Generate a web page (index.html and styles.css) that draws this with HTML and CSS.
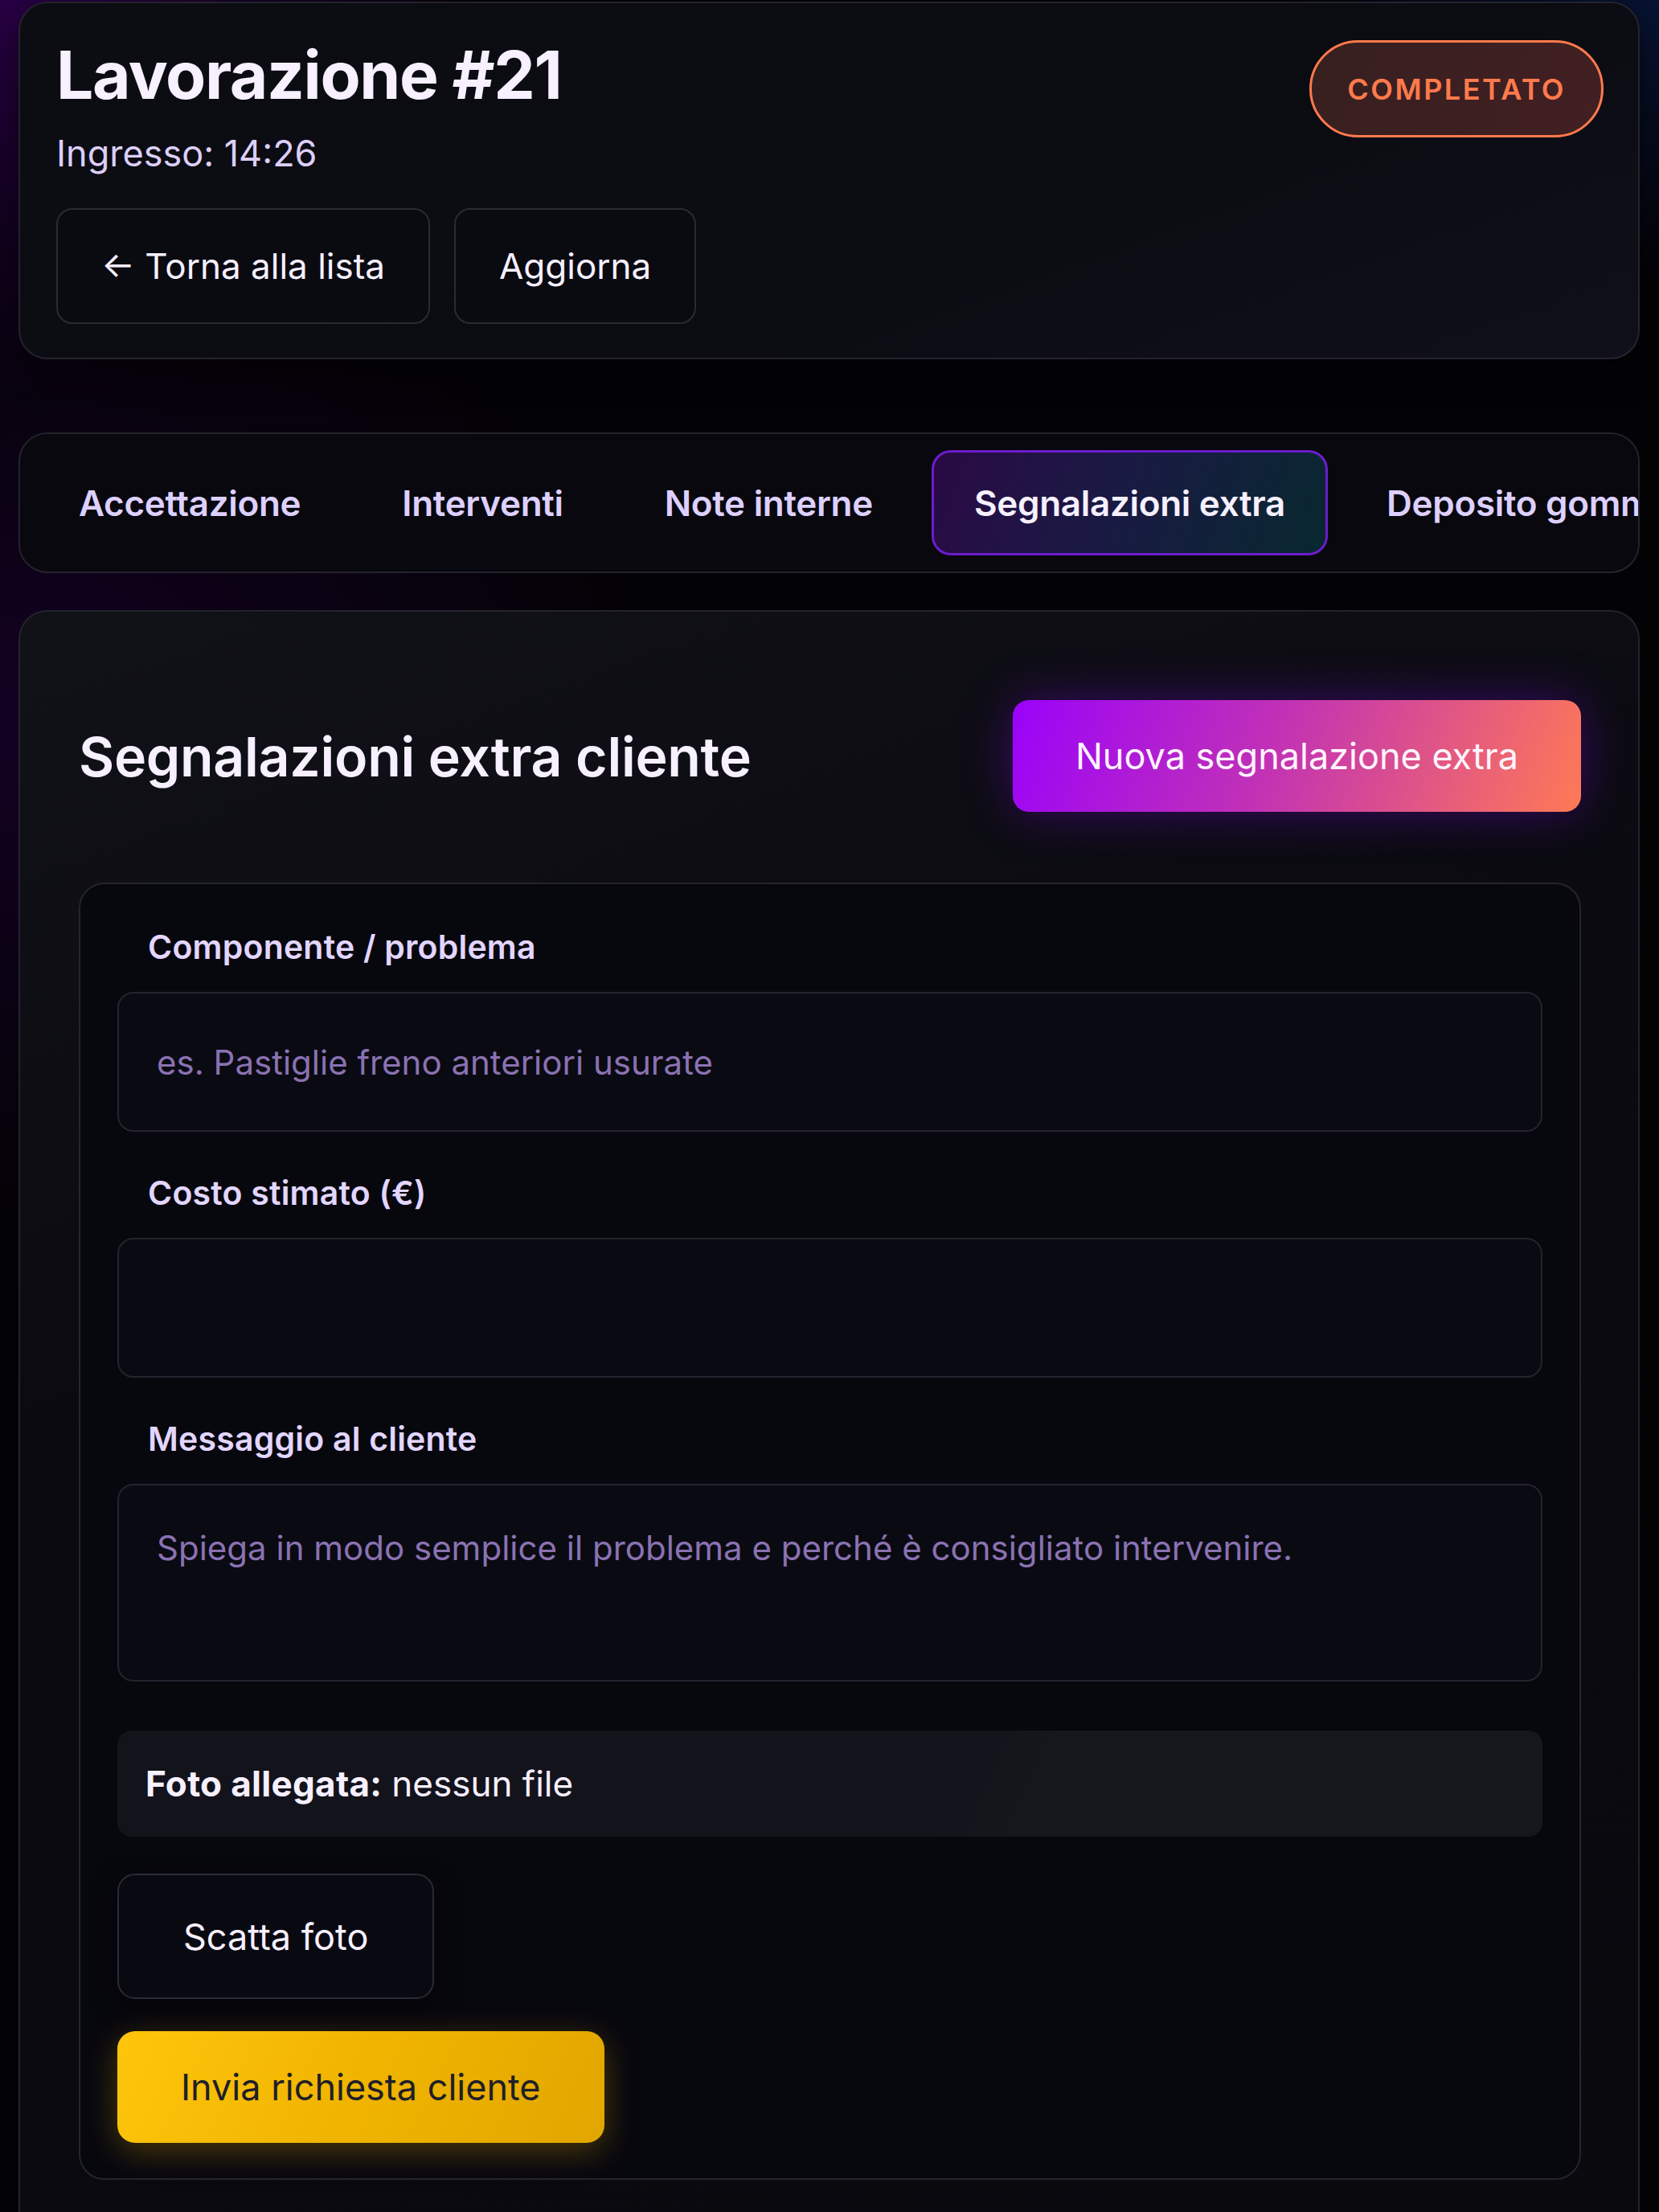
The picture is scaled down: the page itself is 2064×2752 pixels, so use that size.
FILE: index.html
```html
<!DOCTYPE html>
<html lang="it">
	<head>
		<meta charset="UTF-8">
		<title>Lavorazione #21</title>
		<link rel="stylesheet" href="styles.css">
	</head>
	<body>
		<div class="page">
			<!-- testata lavorazione -->
			<header class="job">
				<div class="job-info">
					<h1 class="job-title">Lavorazione #21</h1>
					<p class="job-time">Ingresso: 14:26</p>
					<div class="job-actions">
						<button class="btn btn-line">← Torna alla lista</button>
						<button class="btn btn-line">Aggiorna</button>
					</div>
				</div>
				<span class="status">COMPLETATO</span>
			</header>

			<!-- schede -->
			<nav class="tabs">
				<button class="tab">Accettazione</button>
				<button class="tab">Interventi</button>
				<button class="tab">Note interne</button>
				<button class="tab tab-on">Segnalazioni extra</button>
				<button class="tab">Deposito gomme</button>
			</nav>

			<!-- segnalazioni extra -->
			<section class="panel">
				<div class="panel-head">
					<h2 class="panel-title">Segnalazioni extra cliente</h2>
					<button class="btn btn-grad">Nuova segnalazione extra</button>
				</div>

				<form class="extra">
					<label class="lbl" for="comp">Componente / problema</label>
					<input class="fld" id="comp" type="text" placeholder="es. Pastiglie freno anteriori usurate">

					<label class="lbl" for="costo">Costo stimato (€)</label>
					<input class="fld" id="costo" type="text">

					<label class="lbl" for="msg">Messaggio al cliente</label>
					<textarea class="fld fld-area" id="msg" placeholder="Spiega in modo semplice il problema e perché è consigliato intervenire."></textarea>

					<div class="attach"><b>Foto allegata:</b> nessun file</div>

					<button class="btn btn-photo" type="button">Scatta foto</button>
					<button class="btn btn-yellow" type="button">Invia richiesta cliente</button>
				</form>
			</section>
		</div>
	</body>
</html>
```

FILE: styles.css
```css
*{
	margin: 0;
	padding: 0;
	box-sizing: border-box;
}
html,body{
	background: #050308;
}
body{
	font-family: Inter, "Noto Sans", sans-serif;
	color: #f3ecff;
	min-height: 2752px;
	background:
		radial-gradient(900px 700px at 0 0, rgba(70,0,120,0.55), transparent 70%),
		radial-gradient(700px 500px at 100% 0, rgba(10,30,80,0.6), transparent 70%),
		radial-gradient(1200px 900px at 0 900px, rgba(40,0,70,0.45), transparent 70%),
		#030205;
}
.page{
	padding: 2px 24px 0 23px;
	display: flex;
	flex-direction: column;
}
button{
	font-family: inherit;
	cursor: pointer;
}

/* testata */
.job{
	display: flex;
	justify-content: space-between;
	align-items: flex-start;
	padding: 45px 43px 42px 45px;
	border: 2px solid #24232d;
	border-radius: 36px;
	background: linear-gradient(160deg, #0c0c13, #0b0b12 60%, #10101a);
	box-shadow: 0 20px 40px rgba(0,0,0,0.5);
}
.job-title{
	font-size: 82px;
	line-height: 90px;
	font-weight: 700;
	letter-spacing: -1.4px;
	color: #f6f0ff;
}
.job-time{
	margin-top: 24px;
	font-size: 45px;
	line-height: 56px;
	color: #dccff7;
}
.job-actions{
	display: flex;
	gap: 30px;
	margin-top: 40px;
}
.btn{
	border: 0;
	font-size: 44px;
	display: flex;
	align-items: center;
	justify-content: center;
	white-space: nowrap;
}
.btn-line{
	height: 144px;
	padding: 0 54px;
	border: 2px solid #2a2a34;
	border-radius: 20px;
	background: #0a0a11;
	color: #f6f0ff;
}
.status{
	margin-top: 1px;
	height: 121px;
	padding: 0 44px;
	display: flex;
	align-items: center;
	border: 3px solid #ff7a4c;
	border-radius: 61px;
	background: linear-gradient(120deg, #37201f, #421f23);
	color: #ff7a4c;
	font-size: 36px;
	font-weight: 600;
	letter-spacing: 2.5px;
}

/* schede */
.tabs{
	margin-top: 91px;
	display: flex;
	gap: 20px;
	padding: 20px 0 20px 20px;
	border: 2px solid #24232d;
	border-radius: 36px;
	background: #08080e;
	overflow: hidden;
}
.tab{
	flex: none;
	height: 131px;
	padding: 0 50px;
	border: 3px solid transparent;
	border-radius: 24px;
	background: none;
	color: #ddd0ff;
	font-size: 44px;
	font-weight: 600;
	letter-spacing: -0.3px;
}
.tab-on{
	border-color: #6c1ccc;
	background: linear-gradient(110deg, #2a0a44, #1a1a44 45%, #08282f);
	color: #f6f0ff;
}

/* pannello */
.panel{
	margin-top: 46px;
	padding: 110px 71px 80px 73px;
	border: 2px solid #24232d;
	border-bottom: 0;
	border-radius: 36px 36px 0 0;
	background: linear-gradient(160deg, #111118, #0a0a10 40%, #09090e);
}
.panel-head{
	display: flex;
	justify-content: space-between;
	align-items: center;
}
.panel-title{
	font-size: 68px;
	font-weight: 600;
	letter-spacing: -0.3px;
	color: #f6f0ff;
}
.btn-grad{
	height: 139px;
	padding: 0 78px;
	border-radius: 20px;
	background: linear-gradient(110deg, #9a02fb, #c131b6 45%, #ff7a55);
	color: #fff4ff;
	font-size: 45px;
	box-shadow: 0 0 60px rgba(140,0,255,0.35);
}

/* modulo */
.extra{
	margin-top: 88px;
	display: flex;
	flex-direction: column;
	padding: 53px 46px 44px;
	border: 2px solid #25242f;
	border-radius: 32px;
	background: #07070e;
}
.lbl{
	padding-left: 38px;
	font-size: 41px;
	line-height: 50px;
	font-weight: 600;
	letter-spacing: 0.2px;
	color: #e2d6ff;
}
.fld{
	margin: 31px 0 51px;
	height: 174px;
	padding: 0 47px;
	border: 2px solid #24232f;
	border-radius: 20px;
	background: #0a0a12;
	color: #f3ecff;
	font-family: inherit;
	font-size: 42px;
	outline: none;
}
.fld::placeholder{
	color: #8a72b2;
}
.fld-area{
	height: 246px;
	padding: 48px 47px;
	line-height: 60px;
	resize: none;
	margin-bottom: 61px;
}
.attach{
	height: 132px;
	padding: 0 35px;
	display: flex;
	align-items: center;
	gap: 12px;
	border-radius: 18px;
	background: linear-gradient(115deg, #13131c 58%, #16171c 64%);
	font-size: 44px;
	color: #f6f0ff;
}
.attach b{
	font-weight: 700;
	letter-spacing: 0.3px;
}
.btn-photo{
	align-self: flex-start;
	margin-top: 46px;
	height: 156px;
	padding: 0 80px;
	border: 2px solid #2a2a35;
	border-radius: 22px;
	background: #090911;
	color: #f6f0ff;
	font-size: 45px;
	box-shadow: 0 10px 30px rgba(0,0,0,0.5);
}
.btn-yellow{
	align-self: flex-start;
	margin-top: 40px;
	height: 139px;
	padding: 0 79px;
	border-radius: 22px;
	background: linear-gradient(115deg, #ffc50c, #f0b400 50%, #e1a600);
	color: #1e2028;
	font-size: 45px;
	box-shadow: 0 10px 40px rgba(255,190,0,0.28);
}
```
